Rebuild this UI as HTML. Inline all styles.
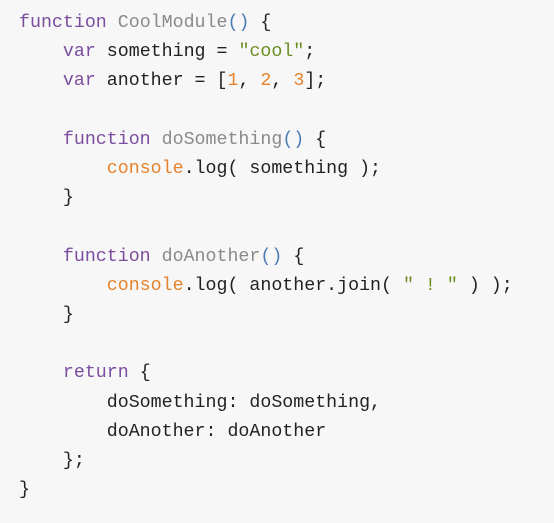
<!DOCTYPE html>
<html><head><style>
html,body{margin:0;padding:0;background:#f7f7f7;}
pre{margin:0;padding:9px 0 0 19px;font-family:"Liberation Mono",monospace;font-size:18.3px;line-height:29.2px;color:#222;}
.k{color:#7b4d9f}.f{color:#8a8a8a}.p{color:#4a7bb5}.s{color:#6b8e23}.n{color:#e5832c}
</style></head><body><pre><span class="k">function</span> <span class="f">CoolModule</span><span class="p">()</span> {
    <span class="k">var</span> something = <span class="s">"cool"</span>;
    <span class="k">var</span> another = [<span class="n">1</span>, <span class="n">2</span>, <span class="n">3</span>];

    <span class="k">function</span> <span class="f">doSomething</span><span class="p">()</span> {
        <span class="n">console</span>.log( something );
    }

    <span class="k">function</span> <span class="f">doAnother</span><span class="p">()</span> {
        <span class="n">console</span>.log( another.join( <span class="s">" ! "</span> ) );
    }

    <span class="k">return</span> {
        doSomething: doSomething,
        doAnother: doAnother
    };
}</pre></body></html>
